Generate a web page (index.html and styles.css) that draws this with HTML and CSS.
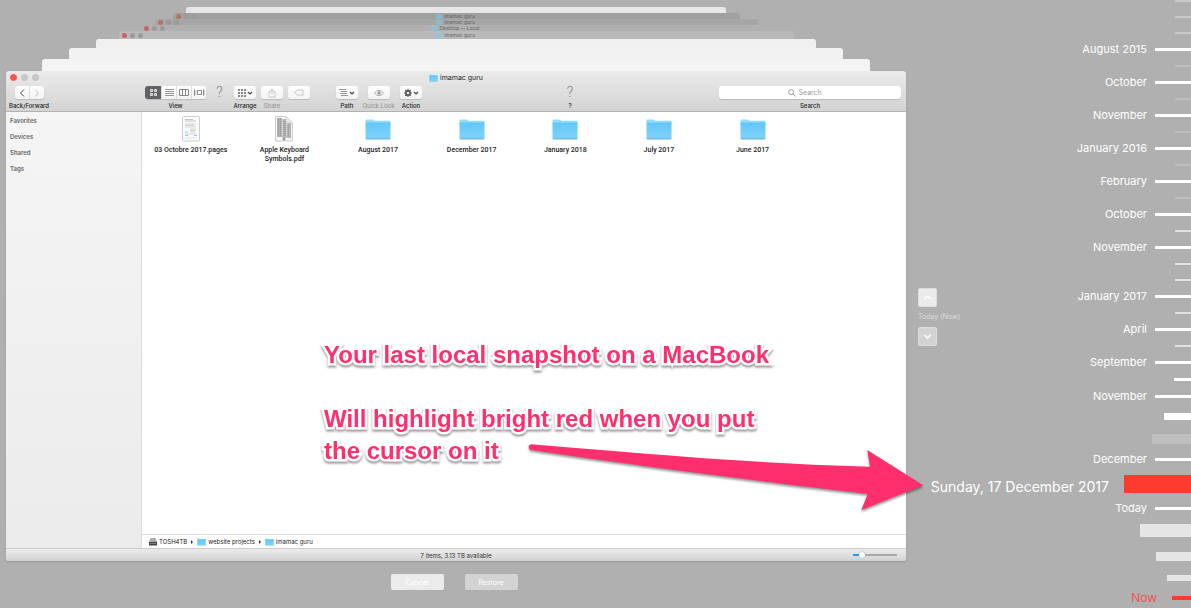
FILE: index.html
```
<!DOCTYPE html>
<html lang="en">
<head>
<meta charset="utf-8">
<title>imamac guru</title>
<link rel="stylesheet" href="styles.css">
</head>
<body>
<svg class="defs" aria-hidden="true">
  <defs>
    <linearGradient id="folder-fill" x1="0" y1="0" x2="0" y2="1">
      <stop offset="0" stop-color="#62c6f8"/><stop offset=".85" stop-color="#7dd2fb"/><stop offset="1" stop-color="#68b8e0"/>
    </linearGradient>
    <symbol id="folder" viewBox="0 0 26 21">
      <path d="M.5 1.500Q.5.5 1.500.5H7.500Q8.500.5 9 1.800H24.500Q25.500 1.800 25.500 3V5H.5Z" fill="#93dcf8"/>
      <path d="M.5 3.500H25.500V19.500Q25.500 20.500 24.500 20.500H1.500Q.5 20.500.5 19.500Z" fill="url(#folder-fill)"/>
    </symbol>
    <symbol id="chev" viewBox="0 0 6 4"><path d="M1 1l2 2 2-2" fill="none" stroke="#444" stroke-width="1.100"/></symbol>
  </defs>
</svg>
<div class="page">
  <main class="stage">
    <div class="stack" aria-hidden="true">
      <div class="sheet s1"></div>
      <div class="sheet dim s2"><i></i><i></i><i></i><span><svg><use href="#folder"/></svg>imamac guru</span></div>
      <div class="sheet dim s3"><i></i><i></i><i></i><span><svg><use href="#folder"/></svg>imamac guru</span></div>
      <div class="sheet dim s4"><i></i><i></i><i></i><span><svg><use href="#folder"/></svg>Desktop — Local</span></div>
      <div class="sheet dim s5"><i></i><i></i><i></i><span><svg><use href="#folder"/></svg>imamac guru</span></div>
      <div class="sheet s6"></div>
      <div class="sheet s7"></div>
      <div class="sheet s8"></div>
    </div>

    <section class="window">
      <header class="chrome">
        <div class="titlebar">
          <div class="lights"><i class="close"></i><i></i><i></i></div>
          <h1><svg class="mini"><use href="#folder"/></svg>imamac guru</h1>
        </div>
        <div class="toolbar">
          <div class="tool t-nav">
            <div class="segment">
              <button aria-label="Back"><svg width="8" height="10" viewBox="0 0 8 10"><path d="M6 1.500L2.500 5 6 8.500" fill="none" stroke="#444"/></svg></button>
              <button aria-label="Forward"><svg width="8" height="10" viewBox="0 0 8 10"><path d="M2 1.500L5.500 5 2 8.500" fill="none" stroke="#bbb"/></svg></button>
            </div>
            <span>Back/Forward</span>
          </div>
          <div class="tool t-view">
            <div class="segment">
              <button class="on" aria-label="Icons"><svg width="7" height="7" viewBox="0 0 7 7"><path d="M.5.5h2v2h-2zM4.500.5h2v2h-2zM.5 4.500h2v2h-2zM4.500 4.500h2v2h-2z" fill="#aaa" stroke="#ddd"/></svg></button>
              <button aria-label="List"><svg width="9" height="7" viewBox="0 0 9 7"><path d="M0 .5h9M0 2.500h9M0 4.500h9M0 6.500h9" stroke="#999"/></svg></button>
              <button aria-label="Columns"><svg width="10" height="7" viewBox="0 0 10 7"><path d="M.5.5h9v6h-9zM3.500.5v6M6.500.5v6" fill="none" stroke="#888"/></svg></button>
              <button aria-label="Cover Flow"><svg width="11" height="7" viewBox="0 0 11 7"><path d="M3.500 1.500h4v4h-4zM.5.5v6M9.500.5v6" fill="none" stroke="#888"/><path d="M1.800 1v5M10.800.5v6" stroke="#aaa" stroke-width=".6"/></svg></button>
            </div>
            <span>View</span>
          </div>
          <div class="tool t-help1"><button class="bare" aria-label="Help">?</button></div>
          <div class="tool t-arrange">
            <button class="push" aria-label="Arrange"><svg width="8" height="8" viewBox="0 0 8 8"><path d="M0 1h8M0 4h8M0 7h8" stroke="#888" stroke-width="2" stroke-dasharray="2 1"/></svg><svg width="6" height="4"><use href="#chev"/></svg></button>
            <span>Arrange</span>
          </div>
          <div class="tool t-share off">
            <button class="push" aria-label="Share"><svg width="8" height="10" viewBox="0 0 8 10"><path d="M3 3.500H1v5.500h6V3.500H5M4 6.500V1M2.500 2.500L4 1l1.500 1.500" fill="none" stroke="#bbb" stroke-width=".8"/></svg></button>
            <span>Share</span>
          </div>
          <div class="tool t-tag">
            <button class="push" aria-label="Tags"><svg width="10" height="7" viewBox="0 0 10 7"><path d="M3 1h6v5H3L1 3.500z" fill="none" stroke="#bbb" stroke-width=".8" stroke-linejoin="round"/></svg></button>
          </div>
          <div class="tool t-path">
            <button class="push" aria-label="Path"><svg width="9" height="7" viewBox="0 0 9 7"><path d="M0 .5h7M2 2.500h6M1 4.500h7M2 6.500h7" stroke="#999"/></svg><svg width="6" height="4"><use href="#chev"/></svg></button>
            <span>Path</span>
          </div>
          <div class="tool t-look off">
            <button class="push" aria-label="Quick Look"><svg width="10" height="8" viewBox="0 0 10 8"><path d="M.5 4Q5-1.500 9.500 4 5 9.500.5 4z" fill="none" stroke="#aaa"/><circle cx="5" cy="4" r="1.700" fill="#999"/></svg></button>
            <span>Quick Look</span>
          </div>
          <div class="tool t-action">
            <button class="push" aria-label="Action"><svg width="8" height="8" viewBox="0 0 8 8"><path d="M4 0v8M0 4h8M1.200 1.200l5.600 5.600M6.800 1.200L1.200 6.800" stroke="#555" stroke-width="1.200"/><circle cx="4" cy="4" r="2.100" fill="#eee" stroke="#555" stroke-width="1.600"/></svg><svg width="6" height="4"><use href="#chev"/></svg></button>
            <span>Action</span>
          </div>
          <div class="tool t-help2"><button class="bare" aria-label="Help">?</button><span>?</span></div>
          <div class="tool t-search">
            <div class="search">
              <svg width="8" height="8" viewBox="0 0 9 9"><circle cx="3.500" cy="3.500" r="2.800" fill="none" stroke="#888" stroke-width=".9"/><path d="M5.600 5.600L8.500 8.500" stroke="#888"/></svg>
              <input id="q" type="text" placeholder="Search">
            </div>
            <label for="q">Search</label>
          </div>
        </div>
      </header>

      <div class="body">
        <nav class="sidebar">
          <a href="#">Favorites</a><a href="#">Devices</a><a href="#">Shared</a><a href="#">Tags</a>
        </nav>
        <div class="content">
          <ul class="files">
            <li><svg width="20" height="26" viewBox="0 0 20 26"><rect x="1.500" y=".5" width="17" height="24.500" rx="1" fill="#fcfcfc" stroke="#ccc"/><path d="M4 3.500h8M4 5h11" stroke="#aaa" stroke-width=".7"/><path d="M4 8h11M4 9.500h9M4 11h11M9 13h6M9 14.500h6M9 16h5M4 18h11" stroke="#c8c8c8" stroke-width=".8"/><path d="M4 16h3M4 19.500h3M13 19.500h3" stroke="#8ecbea"/><path d="M4 22h12" stroke="#ddd"/></svg><span>03 Octobre 2017.pages</span></li>
            <li><svg width="20" height="26" viewBox="0 0 20 26"><path d="M1.500.5H12l6.500 6.500v18h-17z" fill="#f6f6f6" stroke="#ccc"/><path d="M3 2h5v19H3zM8.500 3h4v19h-4zM13 7h4v15h-4z" fill="#b4b4b4"/><path d="M12 .5V7h6.500z" fill="#e6e6e6" stroke="#ccc" stroke-width=".6"/><path d="M4.500 3v17M6.500 3v17M10 5v16M11.500 5v16M14.500 9v12" stroke="#888" stroke-width=".6" stroke-dasharray="1.200 .8"/><circle cx="10" cy="23" r="1.500" fill="#999"/></svg><span>Apple Keyboard Symbols.pdf</span></li>
            <li><svg class="big"><use href="#folder"/></svg><span>August 2017</span></li>
            <li><svg class="big"><use href="#folder"/></svg><span>December 2017</span></li>
            <li><svg class="big"><use href="#folder"/></svg><span>January 2018</span></li>
            <li><svg class="big"><use href="#folder"/></svg><span>July 2017</span></li>
            <li><svg class="big"><use href="#folder"/></svg><span>June 2017</span></li>
          </ul>
          <div class="pathbar">
            <svg width="8" height="8" viewBox="0 0 8 8"><path d="M1.500 0h5L8 4H0z" fill="#aaa"/><path d="M0 4h8v3.500H0z" fill="#444"/><path d="M1 5.500h6" stroke="#999" stroke-width=".7"/></svg>
            <span>TOSH4TB</span><b></b>
            <svg class="mini"><use href="#folder"/></svg><span>website projects</span><b></b>
            <svg class="mini"><use href="#folder"/></svg><span>imamac guru</span>
          </div>
        </div>
      </div>
      <footer class="status">
        <span>7 items, 3.13 TB available</span>
        <input type="range" min="0" max="100" value="16" aria-label="Icon size">
      </footer>
    </section>

    <div class="actions">
      <button>Cancel</button>
      <button class="faint">Restore</button>
    </div>
  </main>

  <div class="stepper">
    <button aria-label="Previous snapshot"><svg width="9" height="7" viewBox="0 0 9 7"><path d="M1.500 5L4.500 2l3 3" fill="none" stroke="#fff" stroke-width="1.500"/></svg></button>
    <span>Today (Now)</span>
    <button class="faint" aria-label="Next snapshot"><svg width="9" height="7" viewBox="0 0 9 7"><path d="M1.500 2L4.500 5l3-3" fill="none" stroke="#fff" stroke-width="1.500"/></svg></button>
  </div>

  <ol class="timeline">
    <li class="minor mid"></li><li class="minor mid"></li><li class="minor mid"></li>
    <li><a href="#">August 2015</a></li><li class="minor"></li>
    <li><a href="#">October</a></li><li class="minor"></li>
    <li><a href="#">November</a></li><li class="minor"></li>
    <li><a href="#">January 2016</a></li><li class="minor"></li>
    <li><a href="#">February</a></li><li class="minor"></li>
    <li><a href="#">October</a></li><li class="minor light"></li>
    <li><a href="#">November</a></li><li class="minor light"></li><li class="minor light"></li>
    <li><a href="#">January 2017</a></li><li class="minor light"></li>
    <li><a href="#">April</a></li><li class="minor light"></li>
    <li><a href="#">September</a></li><li class="near n1"></li>
    <li><a href="#">November</a></li><li class="near n2"></li><li class="near n3"></li>
    <li><a href="#">December</a></li>
    <li class="current"><a href="#">Sunday, 17 December 2017</a></li>
    <li><a href="#">Today</a></li><li class="near n4"></li><li class="near n5"></li><li class="near n6"></li>
    <li class="now"><a href="#">Now</a></li>
  </ol>

  <div class="note">
    <p>Your last local snapshot on a MacBook</p>
    <p>Will highlight bright red when you put the cursor on it</p>
  </div>
  <svg class="arrow" viewBox="0 0 1290 300" aria-hidden="true">
    <path d="M64 43C350 66 700 100 1080 110L1072 60 1240 166 1054 240 1073 192C800 160 400 110 64 60Q56 58 56 51T64 43Z" fill="#ff2e6c"/>
  </svg>
</div>
</body>
</html>
```
FILE: styles.css
```
* { box-sizing: border-box; }
body { margin: 0; font-family: Inter, "Liberation Sans", sans-serif; background: #b0b0b0; color: #222; }
ul, ol, p, h1 { margin: 0; padding: 0; list-style: none; }
a { color: inherit; text-decoration: none; }
button { border: 0; padding: 0; margin: 0; font: inherit; color: inherit; background: none; }
svg { display: block; flex: none; }
.defs { position: absolute; width: 0; height: 0; }

.page {
  position: relative;
  display: grid;
  grid-template-columns: minmax(0, 1fr) 64px 221px;
  min-height: 100vh;
  overflow: hidden;
}
.stage { display: flex; flex-direction: column; padding: 7px 0 18px 6px; }

/* receding windows */
.stack { display: flex; flex-direction: column; align-items: center; }
.sheet { position: relative; border-radius: 3px 3px 0 0; }
.s1 { width: 60%; height: 6px; background: #e7e7e7; }
.s2 { width: 63%; height: 6px; background: #a0a0a0; }
.s3 { width: 67%; height: 6px; background: #a6a6a6; }
.s4 { width: 70%; height: 6px; background: #b0b0b0; }
.s5 { width: 75%; height: 8px; background: #b9b9b9; }
.s6 { width: 80%; height: 9px; background: #f0f0f0; }
.s7 { width: 86%; height: 11px; background: #f2f2f2; }
.s8 { width: 92%; height: 12px; background: #f4f4f4; }
.dim { display: flex; align-items: center; gap: 3px; padding-left: 3px; font-size: 5px; line-height: 6px; color: #666; }
.dim i { width: 5px; height: 5px; border-radius: 50%; background: #9a9a9a; }
.dim i:first-child { background: #c66460; }
.s2 i:first-child, .s3 i:first-child { background: #b9725a; }
.dim span { flex: 1; display: flex; justify-content: center; align-items: center; gap: 2px; padding-right: 28px; }
.dim svg { width: 6px; height: 5px; opacity: .6; }

/* window */
.window {
  flex: 1;
  display: flex;
  flex-direction: column;
  border-radius: 4px 4px 3px 3px;
  overflow: hidden;
  background: #fff;
  font-size: 6px;
  line-height: 9px;
  box-shadow: 0 1px 2px rgba(0, 0, 0, .15);
}
.chrome { background: linear-gradient(#ebebeb, #d3d3d3); border-bottom: 1px solid #b3b3b3; }
.titlebar { display: grid; grid-template-columns: 1fr auto 1fr; align-items: center; height: 13px; }
.lights { display: flex; gap: 4px; padding-left: 4px; }
.lights i { width: 7px; height: 7px; border-radius: 50%; background: #c9c9c9; border: 1px solid #bdbdbd; }
.lights .close { background: #ff544d; border-color: #ee4b45; }
h1 { display: flex; align-items: center; gap: 2px; font-size: 7px; line-height: 10px; font-weight: 400; }
.mini { width: 9px; height: 8px; }
.toolbar { display: flex; align-items: flex-start; height: 27px; padding: 2px 5px 0 4px; }
.tool { display: flex; flex-direction: column; align-items: center; gap: 2px; white-space: nowrap; font-weight: 500; }
.off { color: #999; }
.segment { display: flex; gap: 1px; background: #ddd; border-radius: 3px; overflow: hidden; box-shadow: 0 1px 1px rgba(0, 0, 0, .15); }
.segment button, .push { display: flex; align-items: center; justify-content: center; gap: 1px; height: 13px; background: linear-gradient(#fefefe, #f3f3f3); }
.segment button { width: 14px; }
.segment .on { background: #616167; width: 16px; }
.push { width: 22px; border-radius: 3px; box-shadow: 0 1px 1px rgba(0, 0, 0, .15); }
.bare { height: 13px; font: 300 15px/13px Roboto, sans-serif; color: #888; }
.t-nav { width: 38px; }
.t-view { width: 61px; margin-left: 97px; }
.t-help1 { width: 27px; }
.t-arrange { width: 24px; }
.t-share { width: 30px; }
.t-tag { width: 23px; }
.t-path { width: 24px; margin-left: 25px; }
.t-look { width: 39px; }
.t-action { width: 26px; }
.t-help2 { width: 24px; margin-left: 134px; }
.t-search { width: 182px; margin-left: auto; }
.search { display: flex; align-items: center; justify-content: center; gap: 3px; width: 100%; height: 13px; padding-right: 7px; border-radius: 3px; background: #fff; box-shadow: 0 1px 1px rgba(0, 0, 0, .15); }
.search input { width: 27px; padding: 0; border: 0; outline: 0; background: none; font: 7px/10px Inter, sans-serif; }
.search input::placeholder { color: #999; }

.body { flex: 1; display: grid; grid-template-columns: 136px minmax(0, 1fr); }
.sidebar { display: flex; flex-direction: column; gap: 7px; padding: 4px; background: linear-gradient(#f5f5f5, #ebebeb); border-right: 1px solid #ddd; color: #666; font-weight: 600; }
.content { display: flex; flex-direction: column; }
.files { flex: 1; display: grid; grid-template-columns: repeat(8, 1fr); align-content: start; padding: 4px 13px 0 2px; color: #222; font: 500 7px/9px Roboto, sans-serif; }
.files li { display: flex; flex-direction: column; align-items: center; text-align: center; }
.files .big { width: 26px; height: 21px; margin: 3px 0 2px; }
.files span { max-width: 76px; margin-top: 4px; }
.pathbar { display: flex; align-items: center; gap: 2px; height: 14px; padding-left: 7px; border-top: 1px solid #ddd; }
.pathbar b { width: 0; height: 0; margin: 0 2px; border: 2px solid transparent; border-left-color: #333; border-right: 0; }
.status { display: grid; grid-template-columns: 1fr auto 1fr; align-items: center; height: 13px; background: linear-gradient(#ececec, #d2d2d2); border-top: 1px solid #ccc; color: #333; }
.status span { grid-column: 2; }
.status input { appearance: none; justify-self: end; width: 44px; height: 8px; margin: 0 9px 0 0; background: linear-gradient(90deg, #2b93f5 16%, #a8a8a8 16%) center / 100% 2px no-repeat; }
.status input::-webkit-slider-thumb { appearance: none; width: 6px; height: 6px; border-radius: 50%; background: #fff; box-shadow: 0 0 1px #777; }

.actions { display: flex; justify-content: center; gap: 21px; padding: 13px 4px 0 0; }
.actions button { width: 53px; height: 16px; border-radius: 2px; background: #ebebeb; color: #fff; font-size: 7px; }
.actions .faint, .stepper .faint { background: #d3d3d3; }

.stepper { display: flex; flex-direction: column; justify-content: center; gap: 5px; padding: 72px 0 47px 12px; font-size: 7px; line-height: 10px; color: #ddd; white-space: nowrap; }
.stepper button { display: flex; align-items: center; justify-content: center; width: 19px; height: 19px; border-radius: 2px; background: #ebebeb; border: 1px solid #ddd; }

/* timeline */
.timeline { margin-top: -7px; color: #fff; font-size: 11px; line-height: 17px; }
.timeline li { display: flex; justify-content: flex-end; align-items: center; gap: 8px; height: 17px; white-space: nowrap; }
.timeline li::after { content: ""; flex: none; width: 36px; height: 3px; background: #fff; }
.timeline .minor { height: 16px; }
.timeline .minor::after { width: 16px; height: 2px; background: #bebebe; }
.timeline .mid::after { background: #c8c8c8; }
.timeline .light::after { background: #e2e2e2; }
.timeline .near::after { background: #e5e5e5; }
.timeline .n1::after { width: 17px; height: 3px; background: #fff; }
.timeline .n2 { height: 22px; }
.timeline .n2::after { width: 27px; height: 7px; background: #fff; }
.timeline .n3 { height: 24px; }
.timeline .n3::after { width: 39px; height: 10px; background: #bfbfbf; }
.timeline .n4 { height: 27px; }
.timeline .n4::after { width: 51px; height: 13px; }
.timeline .n5 { height: 25px; }
.timeline .n5::after { width: 35px; height: 9px; }
.timeline .n6 { height: 18px; }
.timeline .n6::after { width: 24px; height: 6px; }
.timeline .current { height: 32px; gap: 15px; font-size: 14px; }
.timeline .current::after { width: 67px; height: 18px; background: #ff3b30; }
.timeline .current a { padding-top: 5px; }
.timeline .now { height: 21px; gap: 15px; font-size: 12px; font-weight: 300; color: #ff3b30; }
.timeline .now::after { width: 19px; height: 4px; background: #ff3b30; }

/* callout drawn over the window */
.note {
  position: absolute;
  left: 324px;
  top: 339px;
  width: 460px;
  display: flex;
  flex-direction: column;
  gap: 32px;
  font: bold 24px/32px "Liberation Sans", Arial, sans-serif;
  color: #ff2e6c;
  -webkit-text-stroke: 5px #fff;
  paint-order: stroke fill;
  filter: drop-shadow(0 2px 1px rgba(0, 0, 0, .4));
}
.arrow { position: absolute; left: 510px; top: 430px; width: 430px; height: 100px; filter: drop-shadow(0 2px 1px rgba(0, 0, 0, .4)); }
```
